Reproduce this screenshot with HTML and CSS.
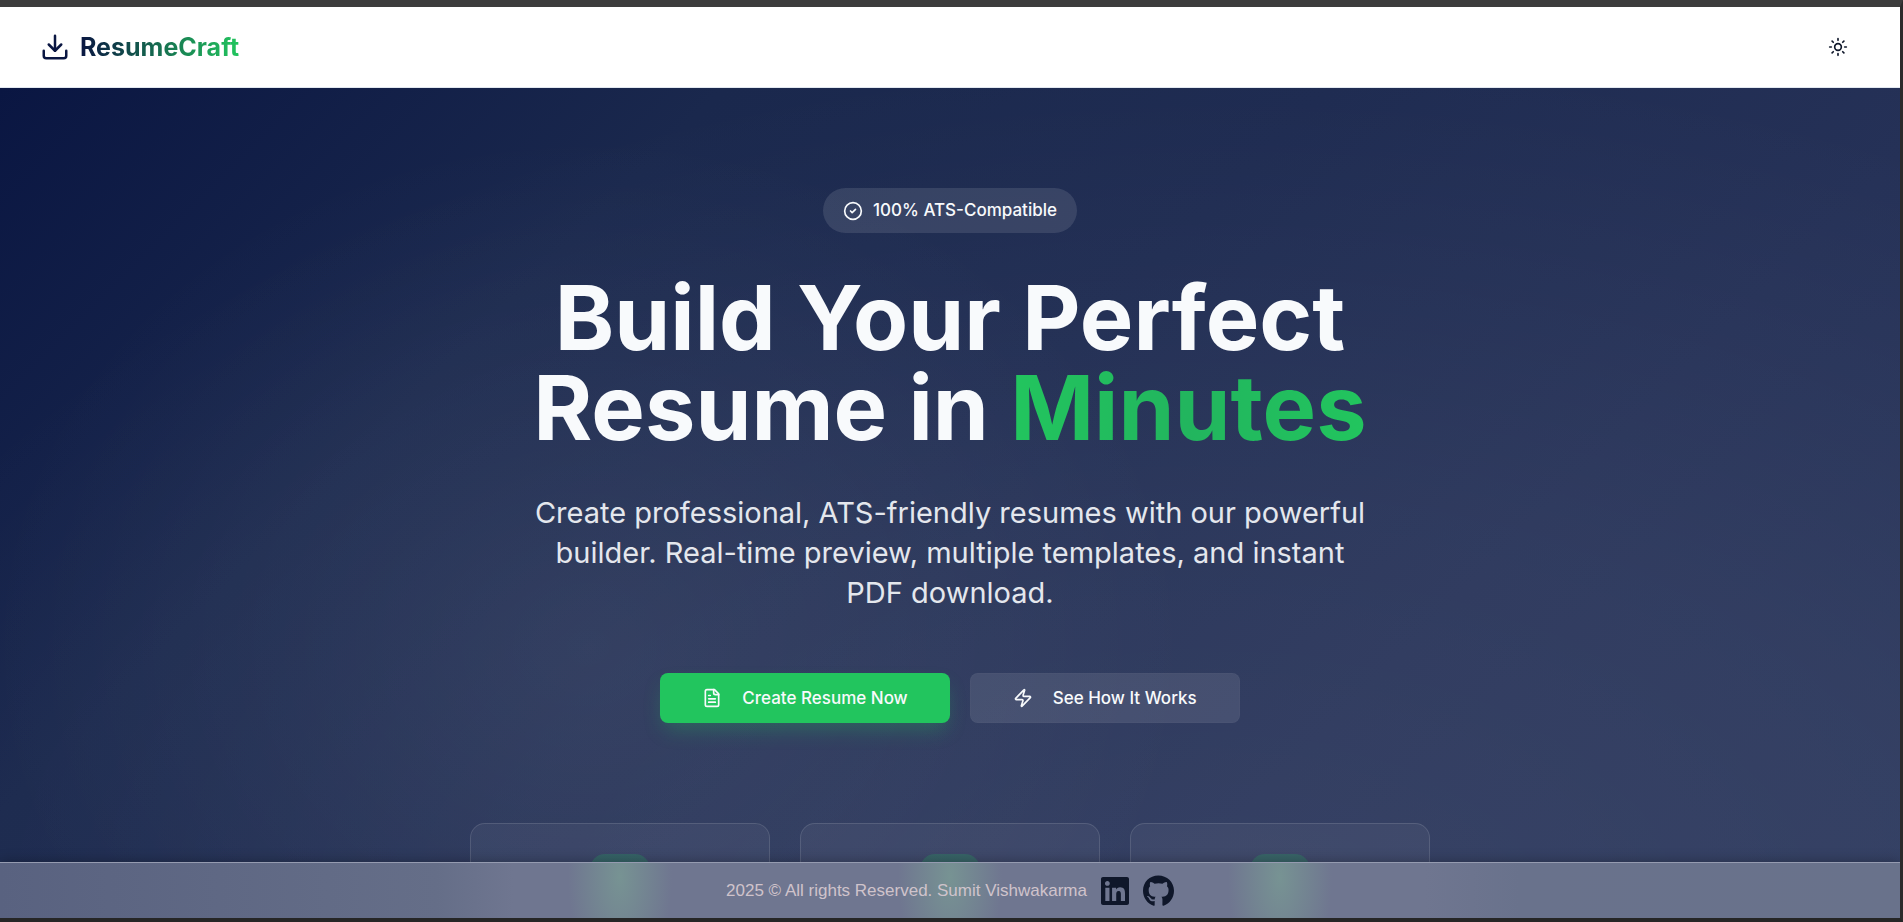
FILE: index.html
```html
<!DOCTYPE html>
<html lang="en">
<head>
<meta charset="utf-8">
<meta name="viewport" content="width=device-width, initial-scale=1">
<title>ResumeCraft</title>
<link rel="stylesheet" href="styles.css">
</head>
<body>
<div class="frame">
  <header class="navbar">
    <a class="brand" href="#">
      <svg class="icon icon-lg" viewBox="0 0 24 24"><path d="M21 15v4a2 2 0 0 1-2 2H5a2 2 0 0 1-2-2v-4"/><path d="m7 10 5 5 5-5"/><path d="M12 15V3"/></svg>
      <span class="brand-name">ResumeCraft</span>
    </a>
    <button class="theme-toggle" type="button" aria-label="Toggle theme">
      <svg class="icon" viewBox="0 0 24 24"><circle cx="12" cy="12" r="4"/><path d="M12 2v2M12 20v2M4.93 4.93l1.41 1.41M17.66 17.66l1.41 1.41M2 12h2M20 12h2M6.34 17.66l-1.41 1.41M19.07 4.93l-1.41 1.41"/></svg>
    </button>
  </header>

  <main class="hero">
    <div class="badge">
      <svg class="icon" viewBox="0 0 24 24"><circle cx="12" cy="12" r="10"/><path d="m9 12 2 2 4-4"/></svg>
      <span>100% ATS-Compatible</span>
    </div>
    <h1 class="title">Build Your Perfect Resume in <span class="accent">Minutes</span></h1>
    <p class="lead">Create professional, ATS-friendly resumes with our powerful builder. Real-time preview, multiple templates, and instant PDF download.</p>
    <div class="actions">
      <button class="btn btn-primary" type="button">
        <svg class="icon" viewBox="0 0 24 24"><path d="M15 2H6a2 2 0 0 0-2 2v16a2 2 0 0 0 2 2h12a2 2 0 0 0 2-2V7Z"/><path d="M14 2v4a2 2 0 0 0 2 2h4M10 9H8M16 13H8M16 17H8"/></svg>
        Create Resume Now
      </button>
      <button class="btn btn-glass" type="button">
        <svg class="icon" viewBox="0 0 24 24"><path d="M4 14a1 1 0 0 1-.78-1.63l9.9-10.2a.5.5 0 0 1 .86.46l-1.92 6.02A1 1 0 0 0 13 10h7a1 1 0 0 1 .78 1.63l-9.9 10.2a.5.5 0 0 1-.86-.46l1.92-6.02A1 1 0 0 0 11 14z"/></svg>
        See How It Works
      </button>
    </div>
    <div class="cards">
      <div class="card"><div class="card-icon"></div></div>
      <div class="card"><div class="card-icon"></div></div>
      <div class="card"><div class="card-icon"></div></div>
    </div>
  </main>

  <footer class="footer">
    <span>2025 © All rights Reserved. Sumit Vishwakarma</span>
    <a href="#" aria-label="LinkedIn"><svg class="social" viewBox="0 0 448 512"><path d="M416 32H31.9C14.3 32 0 46.5 0 64.3v383.4C0 465.5 14.3 480 31.9 480H416c17.6 0 32-14.5 32-32.3V64.3c0-17.8-14.4-32.3-32-32.3zM135.4 416H69V202.2h66.5V416zm-33.2-243c-21.3 0-38.5-17.3-38.5-38.5S80.9 96 102.2 96c21.2 0 38.5 17.3 38.5 38.5 0 21.3-17.2 38.5-38.5 38.5zm282.1 243h-66.4V312c0-24.8-.5-56.7-34.5-56.7-34.6 0-39.9 27-39.9 54.9V416h-66.4V202.2h63.7v29.2h.9c8.9-16.8 30.6-34.5 62.9-34.5 67.2 0 79.7 44.3 79.7 101.9V416z"/></svg></a>
    <a href="#" aria-label="GitHub"><svg class="social" viewBox="0 0 496 512"><path d="M165.9 397.4c0 2-2.3 3.6-5.2 3.6-3.3.3-5.6-1.3-5.6-3.6 0-2 2.3-3.6 5.2-3.6 3-.3 5.6 1.3 5.6 3.6zm-31.1-4.5c-.7 2 1.3 4.3 4.3 4.9 2.6 1 5.6 0 6.2-2s-1.3-4.3-4.3-5.2c-2.6-.7-5.5.3-6.2 2.3zm44.2-1.7c-2.9.7-4.9 2.6-4.6 4.9.3 2 2.9 3.3 5.9 2.6 2.9-.7 4.9-2.6 4.6-4.6-.3-1.9-3-3.2-5.9-2.9zM244.8 8C106.1 8 0 113.3 0 252c0 110.9 69.8 205.8 169.5 239.2 12.8 2.3 17.3-5.6 17.3-12.1 0-6.2-.3-40.4-.3-61.4 0 0-70 15-84.7-29.8 0 0-11.4-29.1-27.8-36.6 0 0-22.9-15.7 1.6-15.4 0 0 24.9 2 38.6 25.8 21.9 38.6 58.6 27.5 72.9 20.9 2.3-16 8.8-27.1 16-33.7-55.9-6.2-112.3-14.3-112.3-110.5 0-27.5 7.6-41.3 23.6-58.9-2.6-6.5-11.1-33.3 2.6-67.9 20.9-6.5 69 27 69 27 20-5.6 41.5-8.5 62.8-8.5s42.8 2.9 62.8 8.5c0 0 48.1-33.6 69-27 13.7 34.7 5.2 61.4 2.6 67.9 16 17.7 25.8 31.5 25.8 58.9 0 96.5-58.9 104.2-114.8 110.5 9.2 7.9 17 22.9 17 46.4 0 33.7-.3 75.4-.3 83.6 0 6.5 4.6 14.4 17.3 12.1C428.2 457.8 496 362.9 496 252 496 113.3 383.5 8 244.8 8z"/></svg></a>
  </footer>
</div>
</body>
</html>
```
FILE: styles.css
```css
* { box-sizing: border-box; }

body {
  margin: 0;
  font-family: Inter, "Noto Sans", sans-serif;
  color: #f8fafc;
  background: #262626;
}

.frame {
  position: relative;
  display: flex;
  flex-direction: column;
  height: 100vh;
  overflow: hidden;
  border-style: solid;
  border-width: 7px 3px 4px 0;
  border-color: #3c3c3c #2b2b2b #262626;
}

.icon {
  width: 20px;
  height: 20px;
  flex: none;
  fill: none;
  stroke: currentColor;
  stroke-width: 2;
  stroke-linecap: round;
  stroke-linejoin: round;
}

.icon-lg { width: 30px; height: 30px; }

.navbar {
  display: flex;
  flex: none;
  align-items: center;
  justify-content: space-between;
  padding: 0 40px;
  height: 81px;
  background: #fff;
  border-bottom: 1px solid #e2e8f0;
}

.brand {
  display: flex;
  align-items: center;
  gap: 10px;
  color: #0a1642;
  text-decoration: none;
}

.brand-name {
  font-size: 25px;
  line-height: 35px;
  font-weight: 700;
  color: transparent;
  background: linear-gradient(90deg, #0a1642, #22c55e);
  background-clip: text;
  -webkit-background-clip: text;
}

.theme-toggle {
  display: grid;
  place-items: center;
  width: 45px;
  height: 45px;
  padding: 0;
  border: 0;
  background: none;
  color: #0f172a;
}

.hero {
  display: flex;
  flex: 1 0 auto;
  flex-direction: column;
  align-items: center;
  padding: 100px 40px 0;
  background:
    radial-gradient(ellipse 32% 520px at 31% 560px, rgba(255, 255, 255, 0.06), transparent),
    radial-gradient(ellipse 80% 900px at 65% 860px, rgba(255, 255, 255, 0.08), rgba(255, 255, 255, 0.05) 50%, transparent),
    linear-gradient(135deg, #0a1642 0%, #1a284d 25%, #1e2b51 46%, #253157 68%, #2b385d 100%);
}

.badge {
  display: flex;
  align-items: center;
  gap: 10px;
  padding: 10px 20px;
  border-radius: 999px;
  background: rgba(255, 255, 255, 0.11);
  font-size: 17px;
  line-height: 25px;
  font-weight: 500;
}

.title {
  max-width: 960px;
  margin: 40px 0;
  font-size: 90px;
  line-height: 90px;
  font-weight: 700;
  text-align: center;
}

.accent {
  color: transparent;
  background: linear-gradient(90deg, #22c55e, #22b55e, #22c55e);
  background-clip: text;
  -webkit-background-clip: text;
}

.lead {
  max-width: 840px;
  margin: 0 0 60px;
  font-size: 29px;
  line-height: 40px;
  color: #e4e7ed;
  text-align: center;
}

.actions { display: flex; gap: 20px; }

.btn {
  display: flex;
  align-items: center;
  gap: 20px;
  height: 50px;
  padding: 0 42px;
  border: 0;
  border-radius: 8px;
  font: 500 17px/25px Inter, "Noto Sans", sans-serif;
  color: #f8fafc;
}

.btn-primary {
  background: #22c55e;
  box-shadow: 0 10px 20px -4px rgba(34, 197, 94, 0.3);
}

.btn-glass {
  background: rgba(255, 255, 255, 0.1);
  border: 1px solid rgba(255, 255, 255, 0.02);
}

.cards {
  display: grid;
  grid-template-columns: repeat(3, 1fr);
  gap: 30px;
  width: 100%;
  max-width: 960px;
  margin-top: 100px;
}

.card {
  display: flex;
  justify-content: center;
  align-items: flex-start;
  height: 260px;
  padding: 30px;
  border: 1px solid rgba(255, 255, 255, 0.12);
  border-radius: 15px;
  background: rgba(255, 255, 255, 0.05);
}

.card-icon {
  width: 60px;
  height: 60px;
  border-radius: 15px;
  background: rgba(34, 197, 94, 0.22);
}

.footer {
  position: absolute;
  inset: auto 0 0;
  display: flex;
  align-items: center;
  justify-content: center;
  gap: 14px;
  height: 56px;
  border-top: 1px solid #959bb0;
  background:
    radial-gradient(ellipse 52px 110px at calc(50% - 330px) 14px, #779393, rgba(119, 147, 147, 0)),
    radial-gradient(ellipse 52px 110px at 50% 14px, #779393, rgba(119, 147, 147, 0)),
    radial-gradient(ellipse 52px 110px at calc(50% + 330px) 14px, #779393, rgba(119, 147, 147, 0)),
    linear-gradient(90deg, #596280, #656e88 23%, #6f7690 27%, #6f7690 75%, #69728c 80%, #69728b);
  box-shadow: 0 0 12px rgba(0, 0, 0, 0.3);
  font-family: "Liberation Sans", Arial, sans-serif;
  font-size: 17px;
  color: #cfc3cb;
}

.footer a { display: flex; color: #0f172a; }

.social { width: auto; height: 32px; fill: currentColor; }
```
